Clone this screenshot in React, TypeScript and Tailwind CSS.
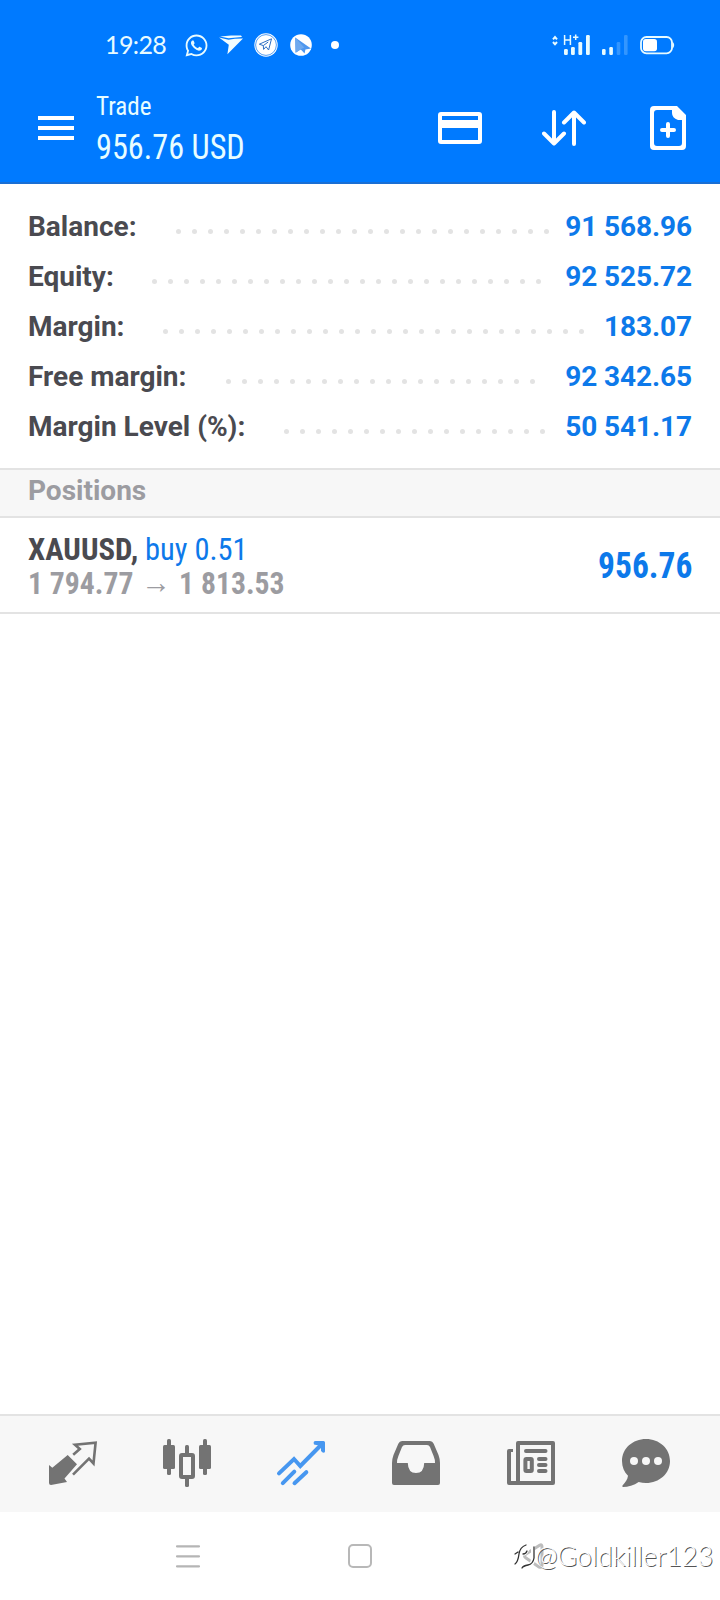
import type { ReactNode } from "react";
import { FaWhatsapp } from "react-icons/fa";

const summary = [
  { label: "Balance:", value: "91 568.96", dots: 24, labelWidth: "w-[148px]" },
  { label: "Equity:", value: "92 525.72", dots: 25, labelWidth: "w-[124px]" },
  { label: "Margin:", value: "183.07", dots: 27, labelWidth: "w-[135px]" },
  { label: "Free margin:", value: "92 342.65", dots: 20, labelWidth: "w-[198px]" },
  { label: "Margin Level (%):", value: "50 541.17", dots: 17, labelWidth: "w-[256px]" },
];

function StatusBar() {
  return (
    <div className="flex h-[72px] items-center pt-[18px] pl-[105px] text-[#e8fbff]">
      <div className="w-[79px] pb-[2px] font-['Lato',sans-serif] text-[25px] leading-none tracking-[-0.6px]">19:28</div>
      <FaWhatsapp className="size-[25px]" />
      <svg className="ml-[10px]" width="24" height="20" viewBox="0 0 24 20" fill="#f2fdff">
        <path d="M0 2.4L9.5 4.8L16 3.8L24 3.4L8.4 19.3L9.8 9.7Z" />
        <path d="M1 1.6L12 .4L22 .6L23 2L9.5 3.2Z" />
      </svg>
      <svg className="ml-[11px]" width="24" height="24" viewBox="0 0 24 24">
        <circle cx="12" cy="12" r="11.7" fill="#fff" />
        <circle cx="12" cy="12" r="10.4" fill="none" stroke="#2b86f0" strokeWidth=".8" />
        <path d="M5.3 11.2L17.5 5.8L14.6 17L12 13.7L9.6 16.4L9.3 12.6Z M9.3 12.6L14.2 9" fill="none" stroke="#2d6fc4" strokeWidth="1" />
      </svg>
      <svg className="ml-[12px]" width="22" height="22" viewBox="0 0 22 22">
        <circle cx="11" cy="11" r="10.8" fill="#fff" />
        <path d="M5.2 3.5L21 14.4L15.4 15.4L14.6 19.6L10.8 15.6L5.6 18.8Z" fill="#4f97ee" />
        <path d="M5.2 3.5L14.2 13.4L10.8 15.2L5.6 18.8Z" fill="#6fa9ee" />
      </svg>
      <div className="ml-[19px] size-2 rounded-full bg-white" />
      <svg className="ml-[212px]" width="124" height="24" viewBox="551 33 124 24" fill="#e8fbff">
        <path d="M553 39.3L555 37L557 39.3M553 42L555 44.3L557 42" fill="none" stroke="#e8fbff" strokeWidth="2" />
        <path d="M564.6 35V45M570.4 35V45M564.6 40H570.4M573 37.3H578.4M575.7 34.6V40" fill="none" stroke="#e8fbff" strokeWidth="1.5" />
        <rect x="564" y="49" width="3.8" height="6" rx="1.2" />
        <rect x="571" y="47" width="3.8" height="8" rx="1.2" />
        <rect x="578.4" y="42" width="3.8" height="13" rx="1.2" />
        <rect x="586" y="35" width="3.8" height="20" rx="1.2" />
        <rect x="602" y="49" width="3.6" height="6" rx="1.2" />
        <rect x="609.3" y="47" width="3.6" height="8" rx="1.2" />
        <rect x="616.7" y="42" width="3.6" height="13" rx="1.2" opacity=".22" />
        <rect x="624" y="35" width="3.6" height="20" rx="1.2" opacity=".22" />
        <rect x="641" y="37" width="31" height="16.3" rx="5.4" fill="none" stroke="#e8fbff" strokeWidth="1.8" />
        <rect x="643" y="39" width="14" height="12.3" rx="2.8" fill="#fff" />
        <path d="M672.5 41.5Q674.2 43 674.2 45.1T672.5 48.7Z" />
      </svg>
    </div>
  );
}

function Header() {
  return (
    <header className="h-[184px] border-b-2 border-[#1a6fd4] bg-[#007aff]">
      <StatusBar />
      <div className="flex h-28 items-center pr-[34px] pl-[38px]">
        <div className="flex w-9 flex-col gap-1.5">
          <div className="h-1 bg-white" />
          <div className="h-1 bg-white" />
          <div className="h-1 bg-white" />
        </div>
        <div className="ml-[22px] w-[342px] pt-[2px] font-['Roboto_Condensed','Roboto',sans-serif] text-[#e8fdff] [font-stretch:75%]">
          <div className="origin-left scale-x-[0.965] text-[26px] leading-[35px]">Trade</div>
          <div className="origin-left scale-x-[0.935] pt-px text-[34.5px] leading-[44px]">956.76 USD</div>
        </div>
        <svg width="44" height="32" viewBox="0 0 44 32">
          <path fillRule="evenodd" fill="#fff" d="M3 0H41Q44 0 44 3V29Q44 32 41 32H3Q0 32 0 29V3Q0 0 3 0ZM4 4V8H40V4ZM4 16V28H40V16Z" />
        </svg>
        <svg className="ml-[60px]" width="44" height="36" viewBox="0 0 44 36" fill="none" stroke="#fff" strokeWidth="4" strokeLinecap="round" strokeLinejoin="round">
          <path d="M12 2V33.5M2 23.5L12 33.5L22 23.5M32 34V2.5M22 12.5L32 2.5L42 12.5" />
        </svg>
        <svg className="ml-[64px]" width="36" height="44" viewBox="0 0 36 44">
          <path fillRule="evenodd" fill="#fff" d="M4 0H27L36 9V40Q36 44 32 44H4Q0 44 0 40V4Q0 0 4 0ZM7 4Q4 4 4 7V37Q4 40 7 40H29Q32 40 32 37V14H28Q22 12 22 7V4Z" />
          <path d="M18 18V30M12 24H24" stroke="#fff" strokeWidth="4" strokeLinecap="round" />
        </svg>
      </div>
    </header>
  );
}

function TabIcon({ children, className = "" }: { children: ReactNode; className?: string }) {
  return (
    <div className={className}>
      <svg className="overflow-visible" width="48" height="48" viewBox="0 0 48 48" fill="#737373">
        {children}
      </svg>
    </div>
  );
}

function TabBar() {
  return (
    <nav className="flex h-[98px] items-center gap-[66px] border-t-2 border-[#e3e3e3] bg-[#f7f7f7] pb-[2px] pl-[49px]">
      <TabIcon>
        <path d="M0 26L3.3 28.7L18.7 16L28 25.3L15.5 39.5L18 43L2 46Q0 46 0 44Z" />
        <path d="M24.2 15.8L30.8 10L26 5.8L46.6 3.6L44.5 24.5L40 19.6L24 35.7" fill="none" stroke="#737373" strokeWidth="2.6" />
      </TabIcon>
      <TabIcon>
        <rect y="6" width="12" height="24" rx="1.5" />
        <rect x="4" width="4" height="36" rx="1.5" />
        <rect x="36" y="6" width="12" height="24" rx="1.5" />
        <rect x="40" width="4" height="36" rx="1.5" />
        <rect x="22" y="6" width="4" height="10" rx="1.5" />
        <rect x="22" y="38" width="4" height="10" rx="1.5" />
        <rect x="18" y="16" width="12" height="22" rx="1" fill="none" stroke="#737373" strokeWidth="4" />
      </TabIcon>
      <TabIcon>
        <path d="M2 34.4L17 20L23.3 27L45.5 4.5M5.8 44.2L17.3 32.7M17.5 44.2L29.3 33.2" fill="none" stroke="#4797f0" strokeWidth="4" strokeLinecap="round" />
        <path d="M38.5 2H46.5Q48 2 48 3.5V12.5Q48 13.7 46 13.7L44 12V7L37 5.5Q35.8 2.4 38.5 2Z" fill="#4797f0" />
      </TabIcon>
      <TabIcon className="ml-px">
        <path fillRule="evenodd" d="M10.5 2H37.5Q40.5 2 41.8 5L46.5 16Q48 20 48 24V44Q48 46 46 46H2Q0 46 0 44V24Q0 20 1.5 16L6.2 5Q7.5 2 10.5 2ZM13 6Q11 6 10 8L6.4 17Q4.8 20.8 5 24H15.8Q16 34 24 34T32.2 24H43Q43.2 20.8 41.6 17L38 8Q37 6 35 6Z" />
      </TabIcon>
      <TabIcon className="ml-px">
        <path fillRule="evenodd" d="M11 2H46Q48 2 48 4V44Q48 46 46 46H2Q0 46 0 44V12Q0 10 2 10H6V13H4V42H9V4Q9 2 11 2ZM13 6V42H44V6Z" />
        <path d="M19 12H38.5M32 20H38.5M32 26H38.5M32 32H38.5" stroke="#737373" strokeWidth="4" strokeLinecap="round" />
        <rect x="18.4" y="20" width="6.4" height="12" rx="1" fill="none" stroke="#737373" strokeWidth="4" />
      </TabIcon>
      <TabIcon className="ml-px">
        <path d="M24 0C37.3 0 48 9.5 48 22S37.3 44 24 44C21.5 44 19 43.7 16.7 43C12 46.5 6 48 1 48Q-.5 47.5 .7 46.3C3.5 43.5 5.5 40.5 6 36.8C2.2 33 0 28 0 22C0 9.5 10.7 0 24 0Z" />
        <circle cx="12" cy="22" r="4" fill="#f7f7f7" />
        <circle cx="24" cy="22" r="4" fill="#f7f7f7" />
        <circle cx="36" cy="22" r="4" fill="#f7f7f7" />
      </TabIcon>
    </nav>
  );
}

function SystemNav() {
  return (
    <div className="relative flex h-[88px] items-center px-[102px]">
      <div className="flex flex-1 justify-center">
        <svg width="24" height="24" viewBox="0 0 24 24" stroke="#b5b5b5" strokeWidth="2.2" strokeLinecap="round">
          <path d="M1 2.3H23M1 12.3H23M1 22.3H23" />
        </svg>
      </div>
      <div className="flex flex-1 justify-center">
        <div className="size-6 rounded-[5px] border-2 border-[#b8b8b8]" />
      </div>
      <div className="flex flex-1 justify-center">
        <svg width="24" height="28" viewBox="0 0 24 28" fill="none" stroke="#bdbdbd" strokeWidth="3" strokeLinejoin="round">
          <path d="M20 3Q22 2 22 5V23Q22 26 19 25L6 16Q3 14 6 12Z" />
        </svg>
      </div>
      <div className="absolute top-[26px] left-[512px] flex items-center text-white">
        <svg width="26" height="32" viewBox="0 0 26 32" fill="none" strokeLinecap="round">
          <path d="M1 22Q5 22 6 14Q7 6 14 6M4 14H9M21 7V18Q21 27 12 28M10 13Q13 15 15 10" stroke="#fff" strokeWidth="4" />
          <path d="M3 24Q6 22 7 14Q8 7 14 5M3 14L6 12M22 7V18Q21 24 16 25Q11 26 10 28M11 14Q14 14 15 11" stroke="#333" strokeWidth="1.3" />
        </svg>
        <span className="-ml-[3px] font-['Lato',sans-serif] text-[27px] leading-[36px] font-light tracking-[-0.1px] whitespace-nowrap [text-shadow:1px_1px_0_#555]">@Goldkiller123</span>
      </div>
    </div>
  );
}

export default function App() {
  return (
    <div className="flex h-[1600px] w-[720px] flex-col overflow-hidden bg-white font-['Roboto',sans-serif]">
      <Header />
      <section className="h-[284px] px-7 pt-[18px] text-[28px] leading-[50px] font-bold">
        {summary.map((row) => (
          <div key={row.label} className="flex h-[50px] items-center">
            <div className={`${row.labelWidth} shrink-0 whitespace-nowrap text-[#4a4a50]`}>{row.label}</div>
            <div className="flex gap-[11px] pt-[8px]">
              {Array.from({ length: row.dots }, (_, i) => (
                <div key={i} className="size-[5px] rounded-full bg-[#e3e3e3]" />
              ))}
            </div>
            <div className="ml-auto tracking-[-0.08px] whitespace-nowrap text-[#0d79ea]">{row.value}</div>
          </div>
        ))}
      </section>
      <h2 className="h-[50px] border-y-2 border-[#e3e3e3] bg-[#f7f7f7] px-7 text-[28px] leading-[41px] font-bold text-[#9c9ca1]">
        Positions
      </h2>
      <section className="flex h-24 items-center justify-between border-b-2 border-[#e3e3e3] px-7 pt-[2px] font-['Roboto_Condensed','Roboto',sans-serif] font-bold [font-stretch:75%]">
        <div className="text-[32px] leading-[34px]">
          <div className="flex">
            <div className="w-[117px] origin-left scale-x-[0.962] text-[#4a4a50]">XAUUSD,</div>
            <div className="origin-left scale-x-[0.952] font-normal text-[#0d79ea]">buy 0.51</div>
          </div>
          <div className="flex origin-left scale-x-[0.927] text-[#9c9ca1]">
            <div className="w-[122px]">1 794.77</div>
            <div className="-mt-px w-[41px]">→</div>
            <div>1 813.53</div>
          </div>
        </div>
        <div className="origin-right scale-x-[0.93] text-[36px] leading-none text-[#0d79ea]">956.76</div>
      </section>
      <main className="flex-1" />
      <TabBar />
      <SystemNav />
    </div>
  );
}
